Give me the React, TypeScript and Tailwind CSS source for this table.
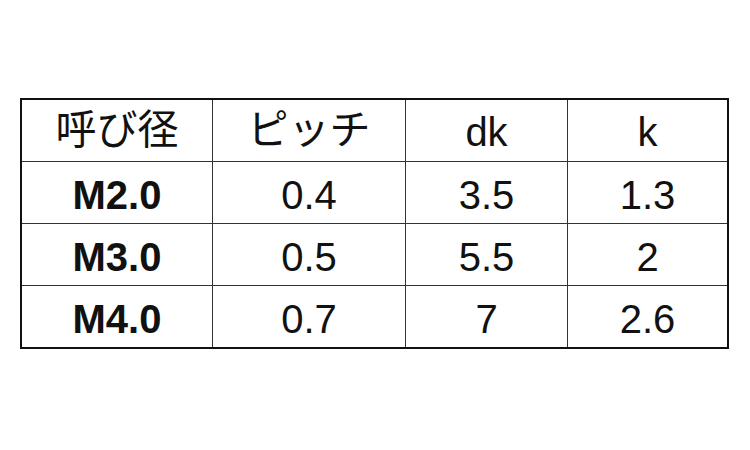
const header = ["呼び径", "ピッチ", "dk", "k"];

const rows = [
  ["M2.0", "0.4", "3.5", "1.3"],
  ["M3.0", "0.5", "5.5", "2"],
  ["M4.0", "0.7", "7", "2.6"],
];

const cols = "grid grid-cols-[190px_193px_162px_160px]";

export default function App() {
  return (
    <div
      className="w-[750px] h-[450px] bg-white pt-[98px] pl-[20px] text-[#111]"
      style={{ fontFamily: '"Liberation Sans", Arial, "Noto Sans CJK JP", sans-serif' }}
    >
      <div className="w-[709px] border-2 border-[#111]">
        <div className={cols}>
          {header.map((h, i) => (
            <div
              key={h}
              className={`h-[61px] flex items-center justify-center leading-none ${i < 2 ? "text-[41px]" : "text-[40px] pt-[2px]"} ${i > 0 ? "border-l border-[#333]" : ""}`}
            >
              {h}
            </div>
          ))}
        </div>
        {rows.map((r) => (
          <div key={r[0]} className={`${cols} border-t border-[#333]`}>
            {r.map((c, i) => (
              <div
                key={i}
                className={`h-[61px] flex items-center justify-center pt-[5px] text-[40px] leading-none ${i === 0 ? "font-bold" : "border-l border-[#333]"}`}
              >
                {c}
              </div>
            ))}
          </div>
        ))}
      </div>
    </div>
  );
}
